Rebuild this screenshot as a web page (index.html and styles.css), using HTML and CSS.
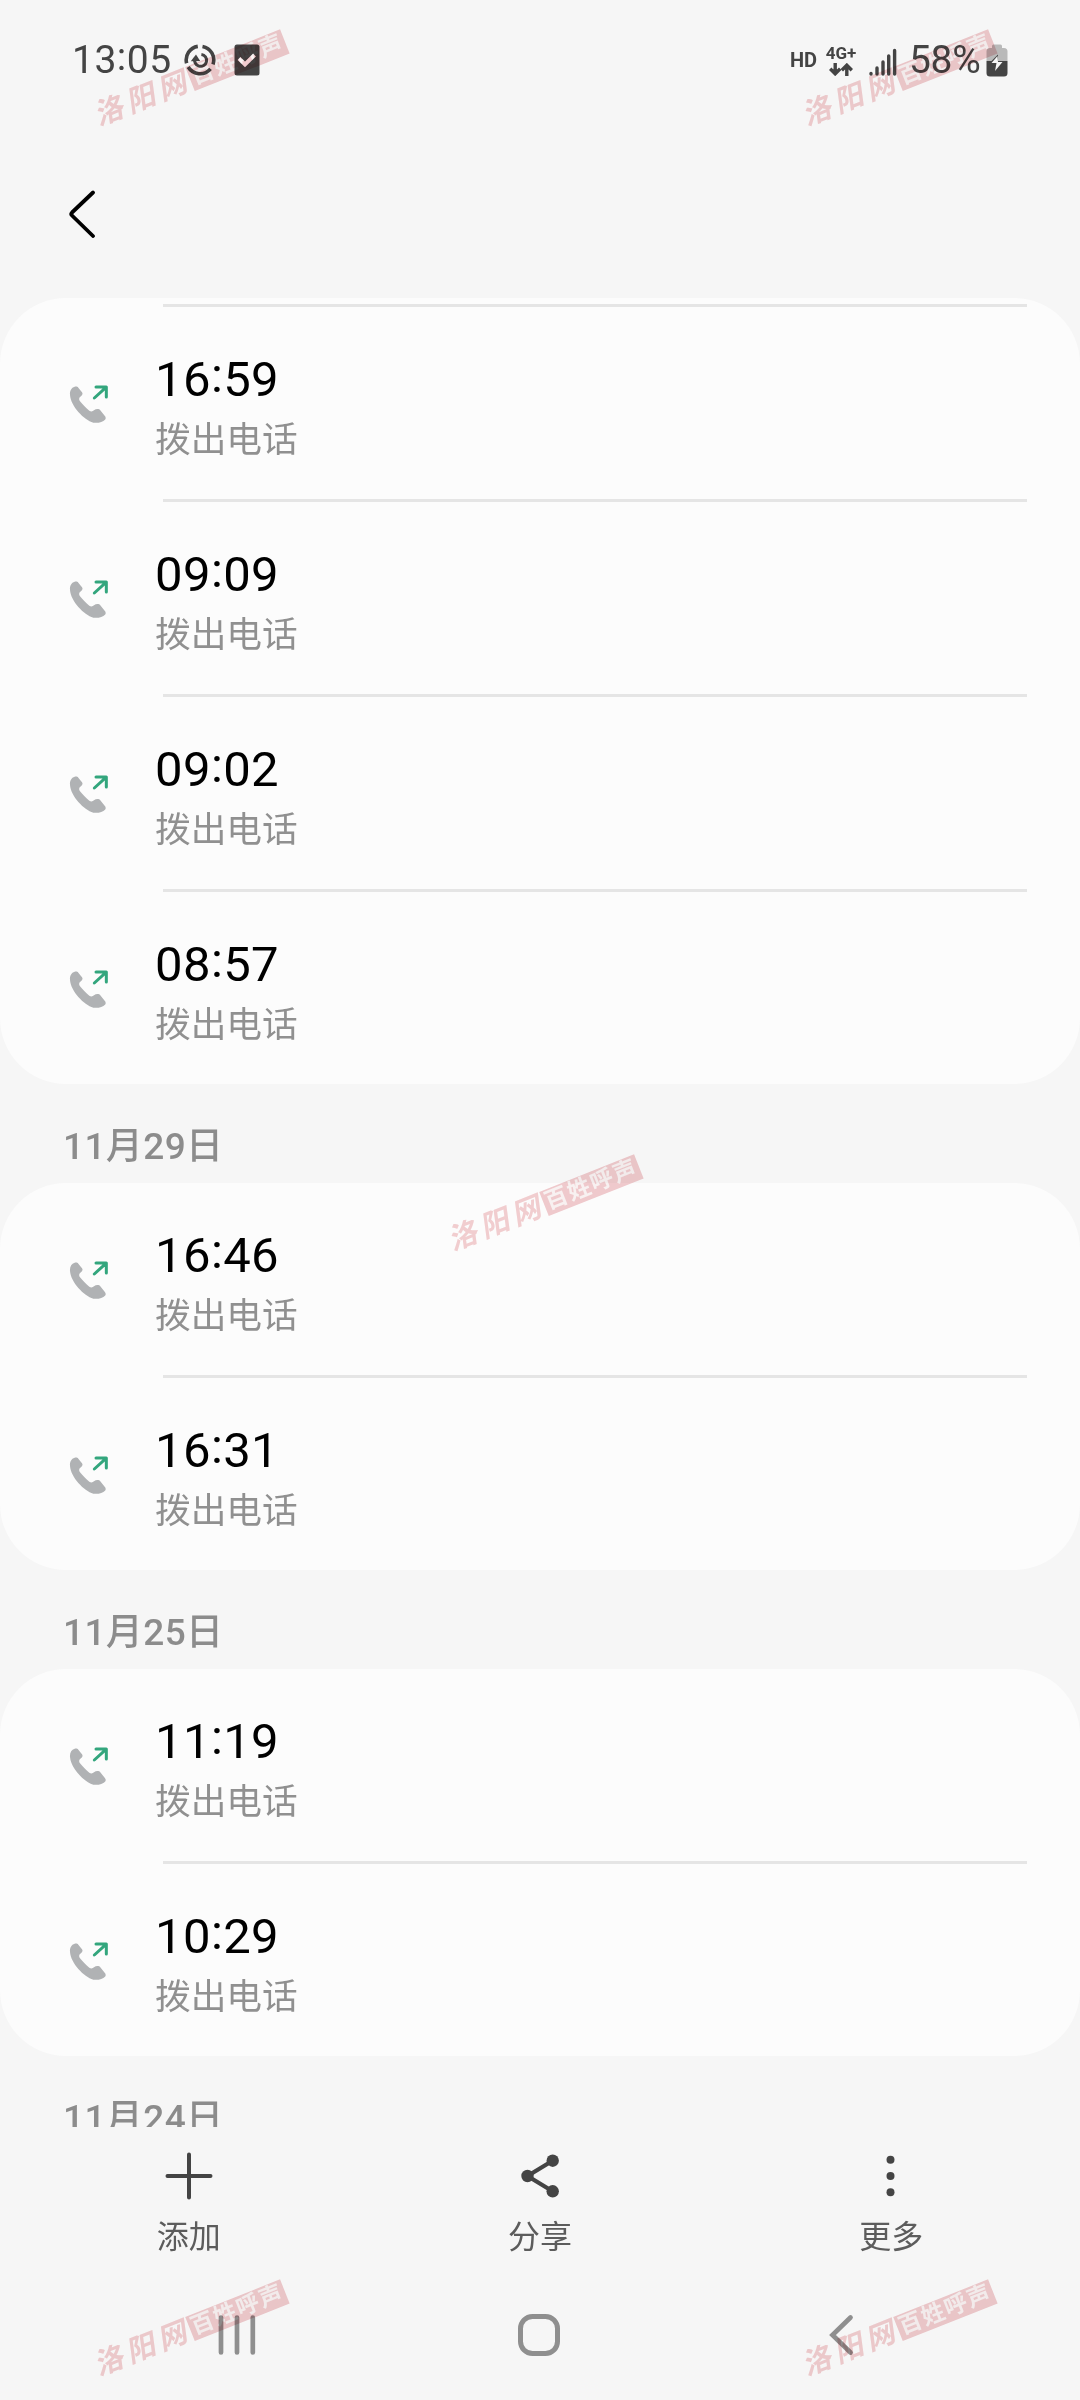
FILE: index.html
```html
<!DOCTYPE html>
<html lang="zh-CN">
<head>
    <meta charset="UTF-8">
    <meta name="viewport" content="width=device-width, initial-scale=1.0">
    <title>通话记录</title>
    <link rel="stylesheet" href="styles.css">
</head>
<body>
    <!-- Icône d'appel sortant, réutilisée sur chaque ligne -->
    <svg class="sprite" width="0" height="0">
        <symbol id="outgoing" viewBox="0 0 180 180">
            <path fill="#b0b2b4" d="M44 50C34 53 29 62 30 75C32 108 72 150 100 158C114 160 129 156 135 149C138 146 138 141 134 137L122 122C116 115 108 117 102 121C98 125 92 125 88 122C78 114 67 103 60 94C56 88 57 83 61 80C68 75 69 71 66 67L55 53C52 49 48 49 44 50Z"/>
            <path fill="none" stroke="#33a67d" stroke-width="9" stroke-linecap="round" stroke-linejoin="round" d="M103 84L138 52M108 51H139V81"/>
        </symbol>
    </svg>

    <header class="status-bar">
        <div class="status-left">
            <span class="clock">13<span class="colon">:</span>05</span>
            <svg class="sync-icon" width="32" height="32" viewBox="0 0 32 32" fill="none" stroke="#444">
                <path stroke-width="3.6" d="M18.5 2.4A13.7 13.7 0 0 1 29 20.3M26.5 24.8A13.7 13.7 0 0 1 4.2 23M2.6 19.2A13.7 13.7 0 0 1 13.8 2.4"/>
                <path stroke-width="3" d="M11 14.2A6 6 0 1 0 17.4 10.4"/>
                <path fill="#444" stroke="none" d="M6.8 17.2L12 10.6L16.2 17Z"/>
            </svg>
            <svg class="check-icon" width="26" height="32" viewBox="0 0 26 32">
                <rect x="0.5" y="0.5" width="25" height="31" rx="2.5" fill="#444"/>
                <path d="M5 14.5L11 20.5L20.5 11" fill="none" stroke="#fff" stroke-width="4"/>
            </svg>
        </div>
        <div class="status-right">
            <span class="hd">HD</span>
            <div class="network">
                <span>4G+</span>
                <svg width="24" height="13" viewBox="0 0 24 13" fill="none" stroke="#444" stroke-width="3.4">
                    <path d="M6.2 0V10M1.2 5.8L6.2 10.8L11.2 5.8M17.8 13V3M12.8 7.2L17.8 2.2L22.8 7.2"/>
                </svg>
            </div>
            <svg class="signal" width="28" height="28" viewBox="0 0 28 28" stroke="#444" stroke-width="3.4" stroke-linecap="round">
                <path d="M2 25.4V26M8 20V26M14 14V26M19.7 8V26M25.6 2.5V26"/>
            </svg>
            <span class="percent">58%</span>
            <svg class="battery" width="22" height="33" viewBox="0 0 22 33">
                <path fill="#b9b9b9" d="M6 2Q6 0.5 7.5 0.5H14.5Q16 0.5 16 2V4H18Q21.5 4 21.5 7.5V17H0.5V7.5Q0.5 4 4 4H6Z"/>
                <path fill="#444" d="M0.5 17H21.5V29Q21.5 32.5 18 32.5H4Q0.5 32.5 0.5 29Z"/>
                <path fill="#444" d="M12 10.5L5.5 17H12Z"/>
                <path fill="#f6f6f6" d="M11.5 12L5.5 19H10.5L9 27L16.5 18H12Z"/>
            </svg>
        </div>
    </header>

    <div class="app-bar">
        <svg width="28" height="48" viewBox="0 0 28 48" fill="none" stroke="#000" stroke-width="3.8" stroke-linecap="round" stroke-linejoin="round">
            <path d="M24 2.5L3 22.5Q1.5 24 3 25.5L24 46"/>
        </svg>
    </div>

    <main class="call-list">
        <section class="card scrolled">
            <div class="call">
                <svg class="call-icon"><use href="#outgoing"/></svg>
                <div class="call-text"><p class="time">16<span class="colon">:</span>59</p><p class="type">拨出电话</p></div>
            </div>
            <div class="call">
                <svg class="call-icon"><use href="#outgoing"/></svg>
                <div class="call-text"><p class="time">09<span class="colon">:</span>09</p><p class="type">拨出电话</p></div>
            </div>
            <div class="call">
                <svg class="call-icon"><use href="#outgoing"/></svg>
                <div class="call-text"><p class="time">09<span class="colon">:</span>02</p><p class="type">拨出电话</p></div>
            </div>
            <div class="call">
                <svg class="call-icon"><use href="#outgoing"/></svg>
                <div class="call-text"><p class="time">08<span class="colon">:</span>57</p><p class="type">拨出电话</p></div>
            </div>
        </section>

        <h2 class="date">11月29日</h2>
        <section class="card">
            <div class="call">
                <svg class="call-icon"><use href="#outgoing"/></svg>
                <div class="call-text"><p class="time">16<span class="colon">:</span>46</p><p class="type">拨出电话</p></div>
            </div>
            <div class="call">
                <svg class="call-icon"><use href="#outgoing"/></svg>
                <div class="call-text"><p class="time">16<span class="colon">:</span>31</p><p class="type">拨出电话</p></div>
            </div>
        </section>

        <h2 class="date">11月25日</h2>
        <section class="card">
            <div class="call">
                <svg class="call-icon"><use href="#outgoing"/></svg>
                <div class="call-text"><p class="time">11<span class="colon">:</span>19</p><p class="type">拨出电话</p></div>
            </div>
            <div class="call">
                <svg class="call-icon"><use href="#outgoing"/></svg>
                <div class="call-text"><p class="time">10<span class="colon">:</span>29</p><p class="type">拨出电话</p></div>
            </div>
        </section>

        <h2 class="date">11月24日</h2>
    </main>

    <!-- Barre d'actions -->
    <div class="toolbar">
        <button class="action">
            <svg width="50" height="50" viewBox="0 0 50 50" stroke="#444" stroke-width="4" stroke-linecap="round">
                <path d="M25 3.5V46.5M3.5 25H46.5"/>
            </svg>
            <span>添加</span>
        </button>
        <button class="action">
            <svg width="50" height="50" viewBox="0 0 50 50" fill="#444">
                <path d="M38 9.5L12.5 25L38 40.5" fill="none" stroke="#444" stroke-width="4.2"/>
                <circle cx="37.7" cy="9.7" r="6.2"/>
                <circle cx="12.5" cy="25" r="6.2"/>
                <circle cx="37.7" cy="40.3" r="6.2"/>
            </svg>
            <span>分享</span>
        </button>
        <button class="action">
            <svg width="50" height="50" viewBox="0 0 50 50" fill="#444">
                <circle cx="24.5" cy="8.7" r="4"/>
                <circle cx="24.5" cy="25" r="4"/>
                <circle cx="24.5" cy="41.3" r="4"/>
            </svg>
            <span>更多</span>
        </button>
    </div>

    <!-- Navigation système -->
    <nav class="nav-bar">
        <svg width="44" height="44" viewBox="0 0 44 44" fill="none" stroke="#8f8f8f" stroke-width="4.7" stroke-linecap="round">
            <path d="M6 4.5V39.5M22 4.5V39.5M37.8 4.5V39.5"/>
        </svg>
        <svg width="44" height="44" viewBox="0 0 44 44" fill="none" stroke="#8f8f8f" stroke-width="5">
            <rect x="3.5" y="3.5" width="37" height="37" rx="12"/>
        </svg>
        <svg width="44" height="44" viewBox="0 0 44 44" fill="none" stroke="#8f8f8f" stroke-width="4.7" stroke-linecap="round">
            <path d="M31.5 4.5L13.5 22L31.5 39.5"/>
        </svg>
    </nav>

    <!-- Filigranes -->
    <div class="watermark top left"><span>洛阳网</span><b>百姓呼声</b></div>
    <div class="watermark top right"><span>洛阳网</span><b>百姓呼声</b></div>
    <div class="watermark middle"><span>洛阳网</span><b>百姓呼声</b></div>
    <div class="watermark bottom left"><span>洛阳网</span><b>百姓呼声</b></div>
    <div class="watermark bottom right"><span>洛阳网</span><b>百姓呼声</b></div>
</body>
</html>
```
FILE: styles.css
```css
* {
    box-sizing: border-box;
    margin: 0;
    padding: 0;
}

body {
    position: relative;
    display: flex;
    flex-direction: column;
    width: 1080px;
    height: 2400px;
    overflow: hidden;
    background-color: #f6f6f6;
    font-family: Roboto, "Noto Sans CJK SC", sans-serif;
}

svg {
    display: block;
    flex-shrink: 0;
}

.sprite {
    position: absolute;
}

/* Les deux-points sont centrés sur la hauteur des chiffres */
.colon {
    vertical-align: 0.09em;
    line-height: 0;
}

.status-bar {
    display: flex;
    justify-content: space-between;
    height: 120px;
    padding: 0 72px;
    color: #444;
}

.status-left,
.status-right {
    display: flex;
    align-items: center;
    height: 120px;
}

.clock,
.percent {
    font-size: 39px;
    font-weight: 400;
    letter-spacing: 0.5px;
}

.clock {
    width: 112px;
}

.check-icon {
    margin-left: 18px;
}

.hd {
    width: 35px;
    margin-left: -1px;
    font-size: 20px;
    font-weight: 700;
}

.network {
    display: flex;
    flex-direction: column;
    align-items: center;
    width: 32px;
    font-size: 17px;
    font-weight: 700;
    line-height: 20px;
}

.network span {
    margin-top: -1px;
}

.signal {
    margin: 4px 12px 0 12px;
}

.percent {
    width: 77px;
    letter-spacing: -0.3px;
    white-space: nowrap;
}

.app-bar {
    display: flex;
    align-items: center;
    height: 178px;
    padding: 10px 0 0 69px;
}

.call-list {
    height: 1829px;
    overflow: hidden;
}

.card {
    background-color: #fcfcfc;
    border-radius: 66px;
    overflow: hidden;
}

.card.scrolled {
    padding-top: 6px;
}

.call {
    display: flex;
    height: 192px;
    padding-left: 60px;
}

.call + .call,
.scrolled .call:first-child {
    height: 195px;
    background: linear-gradient(#e5e5e5, #e5e5e5) 163px 0 / 864px 3px no-repeat;
    padding-top: 3px;
}

.call-icon {
    width: 60px;
    height: 60px;
    margin-top: 63px;
}

.call-text {
    padding: 44px 0 0 35px;
}

.time {
    font-size: 49px;
    line-height: 58px;
    letter-spacing: 0.4px;
    color: #000;
}

.type {
    margin-top: 3px;
    font-size: 35.7px;
    line-height: 56px;
    color: #909090;
}

.date {
    height: 99px;
    padding: 14px 0 0 63px;
    font-size: 37px;
    font-weight: 500;
    line-height: 98px;
    letter-spacing: 0.4px;
    color: #8c8c8c;
}

.toolbar {
    display: flex;
    height: 153px;
    padding: 24px 13px 0;
}

.action {
    display: flex;
    flex: 1;
    flex-direction: column;
    align-items: center;
    border: none;
    background: none;
    color: #5c5c5c;
    font-family: inherit;
    font-size: 32px;
    line-height: 44px;
}

.action span {
    margin-top: 14px;
}

.nav-bar {
    display: flex;
    justify-content: space-around;
    align-items: center;
    height: 110px;
    padding: 0 88px 0 86px;
}

.watermark {
    position: absolute;
    display: flex;
    align-items: center;
    width: 204px;
    height: 26px;
    transform: rotate(-21.6deg);
    mix-blend-mode: multiply;
    white-space: nowrap;
}

.watermark span {
    width: 102px;
    font-size: 29px;
    font-style: italic;
    font-weight: 700;
    line-height: 26px;
    letter-spacing: 5px;
    color: #f4d0d2;
}

.watermark b {
    width: 102px;
    height: 26px;
    background-color: #f2cccf;
    color: #fbf4f4;
    font-size: 23px;
    line-height: 25px;
    letter-spacing: 1.5px;
    text-align: center;
}

.watermark.top {
    top: 66px;
}

.watermark.middle {
    top: 1191px;
    left: 442px;
}

.watermark.bottom {
    top: 2316px;
}

.watermark.left {
    left: 88px;
}

.watermark.right {
    left: 796px;
}
```
